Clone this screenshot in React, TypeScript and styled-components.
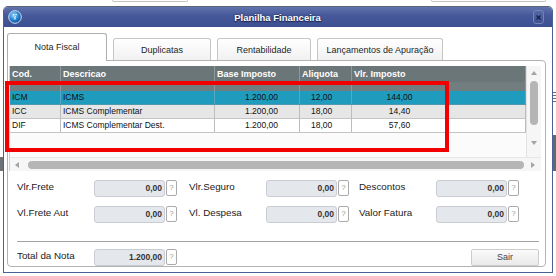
import React from "react";
import styled, { createGlobalStyle } from "styled-components";

const GlobalStyle = createGlobalStyle`
  html, body { margin: 0; padding: 0; background: #ffffff; }
  body {
    width: 556px; height: 276px; overflow: hidden;
    font-family: "Liberation Sans", Arial, sans-serif; color: #222;
  }
  * { box-sizing: border-box; }
`;

const Page = styled.div`
  position: relative;
  width: 556px;
  height: 276px;
  display: flex;
  flex-direction: column;
`;

const TopStrip = styled.div`
  height: 3px;
  display: flex;
`;

const BgField = styled.div<{ $left: number; $width: number }>`
  margin-left: ${(p) => p.$left}px;
  width: ${(p) => p.$width}px;
  height: 2px;
  border: 1px solid #c4c4c4;
  border-top: none;
  border-radius: 0 0 3px 3px;
`;

const Main = styled.div`
  flex: 1;
  display: flex;
`;

const Edge = styled.div`
  width: 3px;
  display: flex;
  flex-direction: column;
`;

const EdgeBlock = styled.div<{ $top: number; $h: number; $bg: string }>`
  margin-top: ${(p) => p.$top}px;
  height: ${(p) => p.$h}px;
  background: ${(p) => p.$bg};
`;

const EdgeMark = styled.div<{ $top: number }>`
  margin-top: ${(p) => p.$top}px;
  height: 12px;
  background: repeating-linear-gradient(to bottom, #6a6a6a 0 1px, #ffffff 1px 3px);
`;

const Window = styled.div`
  width: 550px;
  margin-top: 3px;
  height: 267px;
  border: 1px solid #4a6195;
  border-top-color: #5c6478;
  border-radius: 5px 5px 0 0;
  display: flex;
  flex-direction: column;
  background: #ffffff;
  overflow: hidden;
`;

const TitleBar = styled.div`
  height: 20px;
  flex: none;
  display: flex;
  align-items: center;
  padding: 0 8px 0 4px;
  background: linear-gradient(to bottom, #6274ad 0%, #47599a 40%, #3c4f91 100%);
`;

const TitleText = styled.div`
  flex: 1;
  text-align: center;
  color: #ffffff;
  font-weight: bold;
  font-size: 9.5px;
  text-shadow: 0 0 2px #1a2350, 0 1px 1px #1a2350;
`;

const CloseButton = styled.div`
  width: 11px;
  height: 14px;
  border: 1px solid #7484b8;
  border-radius: 3px;
  background: linear-gradient(to bottom, #5568a6, #3f5294);
  display: flex;
  align-items: center;
  justify-content: center;
`;

const Body = styled.div`
  flex: 1;
  display: flex;
  flex-direction: column;
  padding: 6px 6px 5px 3px;
`;

const TabsRow = styled.div`
  height: 28px;
  display: flex;
  align-items: flex-end;
  gap: 6px;
  margin-bottom: -1px;
  position: relative;
  z-index: 1;
`;

const Tab = styled.div<{ $active?: boolean; $w: number }>`
  width: ${(p) => p.$w}px;
  height: ${(p) => (p.$active ? 28 : 22)}px;
  margin-bottom: ${(p) => (p.$active ? 0 : 1)}px;
  border: 1px solid ${(p) => (p.$active ? "#aeaeae" : "#c6c6c6")};
  border-bottom: none;
  border-radius: 3px 3px 0 0;
  background: ${(p) => (p.$active ? "#ffffff" : "linear-gradient(to bottom, #ffffff, #f1f1f1)")};
  display: flex;
  align-items: center;
  justify-content: center;
  font-size: 9px;
  color: #1e1e1e;
  padding-bottom: ${(p) => (p.$active ? 1 : 0)}px;
`;

const Panel = styled.div`
  flex: 1;
  border: 1px solid #b3b3b3;
  border-radius: 0 4px 4px 4px;
  padding: 5px 4px 0 1px;
  display: flex;
  flex-direction: column;
`;

const GridArea = styled.div`
  display: grid;
  grid-template-columns: 516px 15px;
  grid-template-rows: 91px 14px;
  border-left: 1px solid #d2d2d2;
`;

const Table = styled.div`
  display: flex;
  flex-direction: column;
  background: #fbfbfb;
  overflow: hidden;
`;

const COLS = "51px 154px 85px 52px 174px";

const HeaderRow = styled.div`
  display: grid;
  grid-template-columns: ${COLS};
  height: 25px;
  flex: none;
  background: linear-gradient(to bottom, #6b7679 0 16px, #727d80 16px);
`;

const HeaderCell = styled.div`
  color: #ffffff;
  font-weight: bold;
  font-size: 9px;
  line-height: 12px;
  padding: 2px 0 0 2px;
  border-right: 1px solid #8e999c;
  white-space: nowrap;
  overflow: hidden;
`;

type RowKind = "selected" | "alt" | "plain";

const DataRow = styled.div<{ $kind: RowKind }>`
  display: grid;
  grid-template-columns: ${COLS};
  height: 14px;
  flex: none;
  border-bottom: 1px solid ${(p) => (p.$kind === "selected" ? "#4e98b0" : "#c4c4c4")};
  background: ${(p) =>
    p.$kind === "selected" ? "#1f9bbe" : p.$kind === "alt" ? "#e6e6e6" : "#ffffff"};
`;

const Cell = styled.div<{ $align?: "left" | "right" | "center"; $pl?: number; $pr?: number; $sel?: boolean }>`
  font-size: 8.5px;
  line-height: 13px;
  color: #111;
  text-align: ${(p) => p.$align || "left"};
  padding-left: ${(p) => p.$pl ?? 2}px;
  padding-right: ${(p) => p.$pr ?? 2}px;
  border-right: 1px solid ${(p) => (p.$sel ? "#5aa6bf" : "#bdbdbd")};
  white-space: nowrap;
  overflow: hidden;
`;

const VScroll = styled.div`
  background: #f6f6f6;
  border-left: 1px solid #e2e2e2;
  display: flex;
  flex-direction: column;
  align-items: center;
  padding-top: 5px;
  padding-bottom: 12px;
`;

const VThumb = styled.div`
  margin-top: 6px;
  width: 8px;
  height: 44px;
  border-radius: 4px;
  background: #b5b5b5;
`;

const Spacer = styled.div`
  flex: 1;
`;

const HScroll = styled.div`
  grid-column: 1 / span 2;
  display: flex;
  align-items: center;
  padding: 0 6px 0 5px;
  background: #f6f6f6;
  border-top: 1px solid #e6e6e6;
`;

const HThumb = styled.div`
  flex: 1;
  height: 8px;
  margin: 0 7px 0 9px;
  border-radius: 4px;
  background: #b5b5b5;
`;

const FieldSection = styled.div`
  margin-top: 9px;
  padding-left: 8px;
  margin-right: 2px;
  display: flex;
  flex-direction: column;
`;

const FieldRow = styled.div<{ $mt?: number }>`
  display: flex;
  align-items: flex-start;
  height: 17px;
  margin-top: ${(p) => p.$mt ?? 0}px;
`;

const FieldGroup = styled.div<{ $w?: number }>`
  display: flex;
  align-items: flex-start;
  width: ${(p) => (p.$w ? `${p.$w}px` : "auto")};
  flex: none;
`;

const Label = styled.div`
  width: 77px;
  font-size: 9.8px;
  line-height: 12px;
  padding-top: 1px;
  color: #222;
  white-space: nowrap;
`;

const ValueBox = styled.div`
  width: 71px;
  height: 17px;
  border: 1px solid #c9ccd2;
  border-radius: 3px;
  background: #e4e7ec;
  font-size: 8.5px;
  font-weight: bold;
  color: #333;
  text-align: right;
  line-height: 15px;
  padding-right: 2px;
`;

const Help = styled.div`
  width: 11px;
  height: 16px;
  margin-left: 1px;
  border: 1px solid #aaaaaa;
  border-radius: 2px;
  background: #ffffff;
  color: #9a9a9a;
  font-size: 8px;
  line-height: 14px;
  text-align: center;
`;

const Separator = styled.div`
  margin-top: 18px;
  height: 1px;
  background: #a2a2a2;
`;

const ButtonRow = styled(FieldRow)`
  justify-content: space-between;
`;

const Button = styled.div`
  width: 68px;
  height: 17px;
  border: 1px solid #cccccc;
  border-radius: 2px;
  background: linear-gradient(to bottom, #fbfbfb, #e9e9e9);
  font-size: 9px;
  color: #444;
  line-height: 15px;
  text-align: center;
`;

const Highlight = styled.div`
  position: absolute;
  left: 5px;
  top: 81px;
  width: 444px;
  height: 71px;
  border: 4px solid #f20000;
  pointer-events: none;
`;

const Arrow = ({ dir }: { dir: "up" | "down" | "left" | "right" }) => {
  const pts = {
    up: "0,4 3,0 6,4",
    down: "0,0 6,0 3,4",
    left: "4,0 4,6 0,3",
    right: "0,0 0,6 4,3",
  }[dir];
  const vertical = dir === "up" || dir === "down";
  return (
    <svg width={vertical ? 6 : 4} height={vertical ? 4 : 6} viewBox={vertical ? "0 0 6 4" : "0 0 4 6"} style={{ flex: "none" }}>
      <polygon points={pts} fill="#a3a3a3" />
    </svg>
  );
};

const GlobeIcon = () => (
  <svg width="14" height="14" viewBox="0 0 14 14" style={{ flex: "none" }}>
    <defs>
      <radialGradient id="gl" cx="40%" cy="35%" r="70%">
        <stop offset="0" stopColor="#9fd8ff" />
        <stop offset="0.55" stopColor="#2484d2" />
        <stop offset="1" stopColor="#0b4a8f" />
      </radialGradient>
    </defs>
    <circle cx="7" cy="7" r="6.3" fill="url(#gl)" stroke="#cfe2f4" strokeWidth="1" />
    <rect x="5.2" y="4" width="1.2" height="1.2" fill="#eaf6ff" />
    <rect x="7.6" y="4" width="1.2" height="1.2" fill="#eaf6ff" />
    <rect x="6.4" y="6.2" width="1.2" height="3.4" fill="#eaf6ff" />
  </svg>
);

const CloseIcon = () => (
  <svg width="5" height="5" viewBox="0 0 5 5">
    <path d="M0.5 0.5 L4.5 4.5 M4.5 0.5 L0.5 4.5" stroke="#1a2148" strokeWidth="1.3" />
  </svg>
);

const rows: { kind: RowKind; cod: string; desc: string; base: string; aliq: string; vlr: string }[] = [
  { kind: "selected", cod: "ICM", desc: "ICMS", base: "1.200,00", aliq: "12,00", vlr: "144,00" },
  { kind: "alt", cod: "ICC", desc: "ICMS Complementar", base: "1.200,00", aliq: "18,00", vlr: "14,40" },
  { kind: "plain", cod: "DIF", desc: "ICMS Complementar Dest.", base: "1.200,00", aliq: "18,00", vlr: "57,60" },
];

const Field = ({ label, value, w }: { label: string; value: string; w?: number }) => (
  <FieldGroup $w={w}>
    <Label>{label}</Label>
    <ValueBox>{value}</ValueBox>
    <Help>?</Help>
  </FieldGroup>
);

export default function App() {
  return (
    <Page>
      <GlobalStyle />
      <TopStrip>
        <BgField $left={112} $width={76} />
        <BgField $left={243} $width={115} />
      </TopStrip>
      <Main>
        <Edge>
          <EdgeBlock $top={154} $h={14} $bg="#6d7377" />
        </Edge>
        <Window>
          <TitleBar>
            <GlobeIcon />
            <TitleText>Planilha Financeira</TitleText>
            <CloseButton>
              <CloseIcon />
            </CloseButton>
          </TitleBar>
          <Body>
            <TabsRow>
              <Tab $active $w={100}>Nota Fiscal</Tab>
              <Tab $w={98}>Duplicatas</Tab>
              <Tab $w={94}>Rentabilidade</Tab>
              <Tab $w={126}>Lançamentos de Apuração</Tab>
            </TabsRow>
            <Panel>
              <GridArea>
                <Table>
                  <HeaderRow>
                    <HeaderCell>Cod.</HeaderCell>
                    <HeaderCell>Descricao</HeaderCell>
                    <HeaderCell>Base Imposto</HeaderCell>
                    <HeaderCell>Aliquota</HeaderCell>
                    <HeaderCell>Vlr. Imposto</HeaderCell>
                  </HeaderRow>
                  {rows.map((r) => {
                    const sel = r.kind === "selected";
                    return (
                      <DataRow key={r.cod} $kind={r.kind}>
                        <Cell $sel={sel}>{r.cod}</Cell>
                        <Cell $sel={sel}>{r.desc}</Cell>
                        <Cell $sel={sel} $align="right" $pr={21}>{r.base}</Cell>
                        <Cell $sel={sel} $pl={11}>{r.aliq}</Cell>
                        <Cell $sel={sel} $align="center" $pr={80}>{r.vlr}</Cell>
                      </DataRow>
                    );
                  })}
                </Table>
                <VScroll>
                  <Arrow dir="up" />
                  <VThumb />
                  <Spacer />
                  <Arrow dir="down" />
                </VScroll>
                <HScroll>
                  <Arrow dir="left" />
                  <HThumb />
                  <Arrow dir="right" />
                </HScroll>
              </GridArea>
              <FieldSection>
                <FieldRow>
                  <Field label="Vlr.Frete" value="0,00" w={172} />
                  <Field label="Vlr.Seguro" value="0,00" w={170} />
                  <Field label="Descontos" value="0,00" />
                </FieldRow>
                <FieldRow $mt={9}>
                  <Field label="Vl.Frete Aut" value="0,00" w={172} />
                  <Field label="Vl. Despesa" value="0,00" w={170} />
                  <Field label="Valor Fatura" value="0,00" />
                </FieldRow>
                <Separator />
                <ButtonRow $mt={7}>
                  <Field label="Total da Nota" value="1.200,00" />
                  <Button>Sair</Button>
                </ButtonRow>
              </FieldSection>
            </Panel>
          </Body>
        </Window>
        <Edge>
          <EdgeMark $top={89} />
          <EdgeBlock $top={31} $h={36} $bg="#5e6a72" />
        </Edge>
      </Main>
      <Highlight />
    </Page>
  );
}
